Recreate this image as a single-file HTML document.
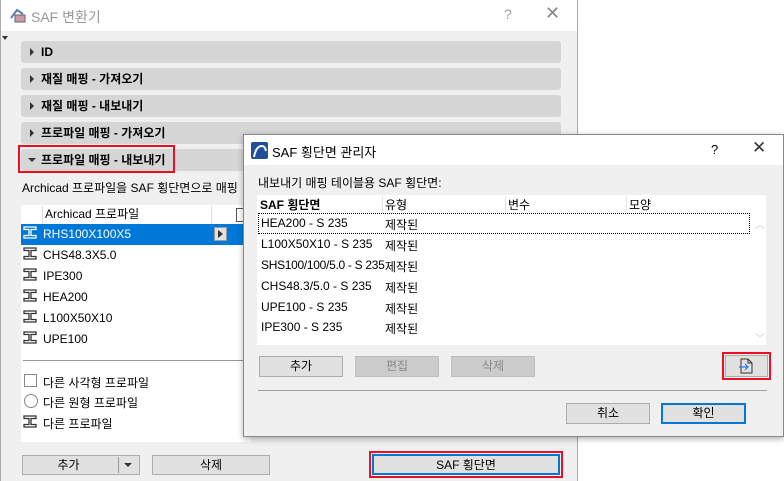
<!DOCTYPE html>
<html><head><meta charset="utf-8"><style>
*{box-sizing:border-box;margin:0;padding:0}
body{width:784px;height:481px;background:#fff;font-family:"Liberation Sans","Noto Sans CJK KR",sans-serif;font-size:12px;color:#000;position:relative;overflow:hidden}
.a{position:absolute}
.bar{position:absolute;left:21px;width:540px;height:22px;background:#d6d6d6;border-radius:3px;font-weight:bold;font-size:12px;line-height:22px;padding-left:20px}
.bar:before{content:"";position:absolute;left:9px;top:7px;border-left:4px solid #333;border-top:4px solid transparent;border-bottom:4px solid transparent}
.bar.open:before{left:7px;top:9px;border-top:4px solid #333;border-left:4px solid transparent;border-right:4px solid transparent;border-bottom:none}
.btn{position:absolute;background:#e1e1e1;border:1px solid #adadad;text-align:center;font-size:12px}
</style></head><body>
<div class="a" style="left:0;top:0;width:578px;height:481px;background:#f0f0f0;border-right:1px solid #aaa;border-left:1px solid #aaa"></div>
<div class="a" style="left:1px;top:0;width:576px;height:31px;background:#fff"></div>
<svg class="a" style="left:9px;top:6px" width="20" height="18"><path d="M2 12 L8 4 L14 8" stroke="#5a7db0" stroke-width="2" fill="none"/><rect x="6" y="9" width="10" height="7" fill="#c9a" stroke="#666"/></svg>
<div class="a" style="left:31px;top:7px;color:#999;font-size:14px">SAF 변환기</div>
<div class="a" style="left:504px;top:6px;color:#999;font-size:14px">?</div>
<div class="a" style="left:545px;top:3px;color:#888;font-size:18px">✕</div>
<div class="a" style="left:2px;top:36px;border-top:4px solid #333;border-left:3px solid transparent;border-right:3px solid transparent"></div>
<div class="bar" style="top:41px">ID</div>
<div class="bar" style="top:68px">재질 매핑 - 가져오기</div>
<div class="bar" style="top:95px">재질 매핑 - 내보내기</div>
<div class="bar" style="top:122px">프로파일 매핑 - 가져오기</div>
<div class="bar open" style="top:149px;">프로파일 매핑 - 내보내기</div>
<div class="a" style="left:18px;top:145px;width:157px;height:28px;border:2px solid #e81123"></div>
<div class="a" style="left:22px;top:179px;font-size:12px">Archicad 프로파일을 SAF 횡단면으로 매핑</div>
<div class="a" style="left:21px;top:205px;width:230px;height:237px;background:#fff"></div>
<div class="a" style="left:42px;top:206px;width:170px;height:18px;border-left:1px solid #ddd;border-right:1px solid #ddd;padding-left:2px;line-height:17px">Archicad 프로파일</div>
<div class="a" style="left:236px;top:208px;width:10px;height:14px;border:1px solid #555;border-right:none"></div>
<div class="a" style="left:21px;top:224px;width:222px;height:21px;background:#0078d7"></div>
<div class="a" style="left:214px;top:227px;width:13px;height:14px;background:#e1e1e1;border:1px solid #999"></div>
<div class="a" style="left:218px;top:230px;border-left:5px solid #333;border-top:4px solid transparent;border-bottom:4px solid transparent"></div>
<div class="a" style="left:43px;top:227px;color:#fff">RHS100X100X5</div>
<div class="a" style="left:43px;top:248px">CHS48.3X5.0</div>
<div class="a" style="left:43px;top:269px">IPE300</div>
<div class="a" style="left:43px;top:290px">HEA200</div>
<div class="a" style="left:43px;top:311px">L100X50X10</div>
<div class="a" style="left:43px;top:332px">UPE100</div>
<svg class="a" style="left:23px;top:226px" width="16" height="120" fill="none" stroke="#333" stroke-width="1.3">
<path d="M1 1H13V3.5H8V9.5H13V12H1V9.5H6V3.5H1Z" stroke="#fff"/>
<path transform="translate(0,21)" d="M1 1H13V3.5H8V9.5H13V12H1V9.5H6V3.5H1Z"/>
<path transform="translate(0,42)" d="M1 1H13V3.5H8V9.5H13V12H1V9.5H6V3.5H1Z"/>
<path transform="translate(0,63)" d="M1 1H13V3.5H8V9.5H13V12H1V9.5H6V3.5H1Z"/>
<path transform="translate(0,84)" d="M1 1H13V3.5H8V9.5H13V12H1V9.5H6V3.5H1Z"/>
<path transform="translate(0,105)" d="M1 1H13V3.5H8V9.5H13V12H1V9.5H6V3.5H1Z"/>
</svg>
<div class="a" style="left:23px;top:360px;width:220px;height:1px;background:#999"></div>
<div class="a" style="left:24px;top:374px;width:13px;height:13px;border:1px solid #888;background:#fff"></div>
<div class="a" style="left:24px;top:394px;width:14px;height:14px;border:1px solid #888;border-radius:50%;background:#fff"></div>
<svg class="a" style="left:23px;top:415px" width="16" height="14" fill="none" stroke="#333" stroke-width="1.3"><path d="M1 1H13V3.5H8V9.5H13V12H1V9.5H6V3.5H1Z"/></svg>
<div class="a" style="left:43px;top:374px">다른 사각형 프로파일</div>
<div class="a" style="left:43px;top:394px">다른 원형 프로파일</div>
<div class="a" style="left:43px;top:415px">다른 프로파일</div>
<div class="a" style="left:549px;top:432px;border-top:4px solid #bbb;border-left:3px solid transparent;border-right:3px solid transparent"></div>
<div class="btn" style="left:22px;top:455px;width:118px;height:20px;line-height:18px;padding-right:25px">추가</div>
<div class="a" style="left:118px;top:457px;width:1px;height:16px;background:#999"></div>
<div class="a" style="left:124px;top:463px;border-top:4px solid #333;border-left:4px solid transparent;border-right:4px solid transparent"></div>
<div class="btn" style="left:152px;top:455px;width:118px;height:20px;line-height:18px">삭제</div>
<div class="a" style="left:369px;top:451px;width:194px;height:27px;border:2px solid #e81123"></div>
<div class="btn" style="left:372px;top:454px;width:188px;height:21px;line-height:18px;border:2px solid #0078d7">SAF 횡단면</div>
<!-- dialog -->
<div class="a" style="left:243px;top:134px;width:541px;height:303px;background:#f0f0f0;border:1px solid #888;box-shadow:0 2px 6px rgba(0,0,0,.3)"></div>
<div class="a" style="left:244px;top:135px;width:539px;height:30px;background:#fff"></div>
<svg class="a" style="left:251px;top:142px" width="17" height="17"><rect width="17" height="17" rx="2" fill="#1f4e9a"/><path d="M3 15 Q5 4 11 4 Q14 4 15 9" stroke="#fff" stroke-width="2" fill="none"/></svg>
<div class="a" style="left:272px;top:142px;font-size:13px">SAF 횡단면 관리자</div>
<div class="a" style="left:711px;top:142px;font-size:13px">?</div>
<div class="a" style="left:752px;top:138px;font-size:17px;color:#333">✕</div>
<div class="a" style="left:258px;top:174px">내보내기 매핑 테이블용 SAF 횡단면:</div>
<div class="a" style="left:257px;top:195px;width:509px;height:150px;background:#fff"></div>
<div class="a" style="left:260px;top:196px;font-weight:bold">SAF 횡단면</div>
<div class="a" style="left:385px;top:196px">유형</div>
<div class="a" style="left:508px;top:196px">변수</div>
<div class="a" style="left:629px;top:196px">모양</div>
<div class="a" style="left:382px;top:196px;width:1px;height:17px;background:#e5e5e5"></div>
<div class="a" style="left:505px;top:196px;width:1px;height:17px;background:#e5e5e5"></div>
<div class="a" style="left:626px;top:196px;width:1px;height:17px;background:#e5e5e5"></div>
<div class="a" style="left:258px;top:213px;width:492px;height:21px;border:1px dotted #000"></div>
<div class="a" style="left:261px;top:216px">HEA200 - S 235</div>
<div class="a" style="left:261px;top:237px">L100X50X10 - S 235</div>
<div class="a" style="left:261px;top:258px;letter-spacing:-0.3px">SHS100/100/5.0 - S 235</div>
<div class="a" style="left:261px;top:279px">CHS48.3/5.0 - S 235</div>
<div class="a" style="left:261px;top:300px">UPE100 - S 235</div>
<div class="a" style="left:261px;top:320px">IPE300 - S 235</div>
<div class="a" style="left:385px;top:216px">제작된</div>
<div class="a" style="left:385px;top:237px">제작된</div>
<div class="a" style="left:385px;top:258px">제작된</div>
<div class="a" style="left:385px;top:279px">제작된</div>
<div class="a" style="left:385px;top:300px">제작된</div>
<div class="a" style="left:385px;top:320px">제작된</div>
<div class="a" style="left:755px;top:216px;color:#ccc;font-size:10px">︿</div>
<div class="a" style="left:755px;top:330px;color:#ccc;font-size:10px">﹀</div>
<div class="btn" style="left:259px;top:356px;width:84px;height:21px;line-height:19px">추가</div>
<div class="btn" style="left:355px;top:356px;width:84px;height:21px;line-height:19px;background:#ccc;border-color:#bfbfbf;color:#888">편집</div>
<div class="btn" style="left:451px;top:356px;width:84px;height:21px;line-height:19px;background:#ccc;border-color:#bfbfbf;color:#888">삭제</div>
<div class="a" style="left:722px;top:352px;width:49px;height:28px;border:2px solid #e81123"></div>
<div class="btn" style="left:725px;top:355px;width:43px;height:22px"></div>
<svg class="a" style="left:738px;top:358px" width="16" height="16" fill="none"><path d="M3 1H10L14 5V15H3Z M10 1V5H14" stroke="#333"/><path d="M1 9H10 M7 6L10 9L7 12" stroke="#2a7be4" stroke-width="1.2"/></svg>
<div class="a" style="left:258px;top:390px;width:509px;height:1px;background:#a0a0a0"></div>
<div class="btn" style="left:566px;top:403px;width:84px;height:21px;line-height:19px">취소</div>
<div class="btn" style="left:661px;top:403px;width:85px;height:21px;line-height:17px;border:2px solid #0078d7">확인</div>
</body></html>
